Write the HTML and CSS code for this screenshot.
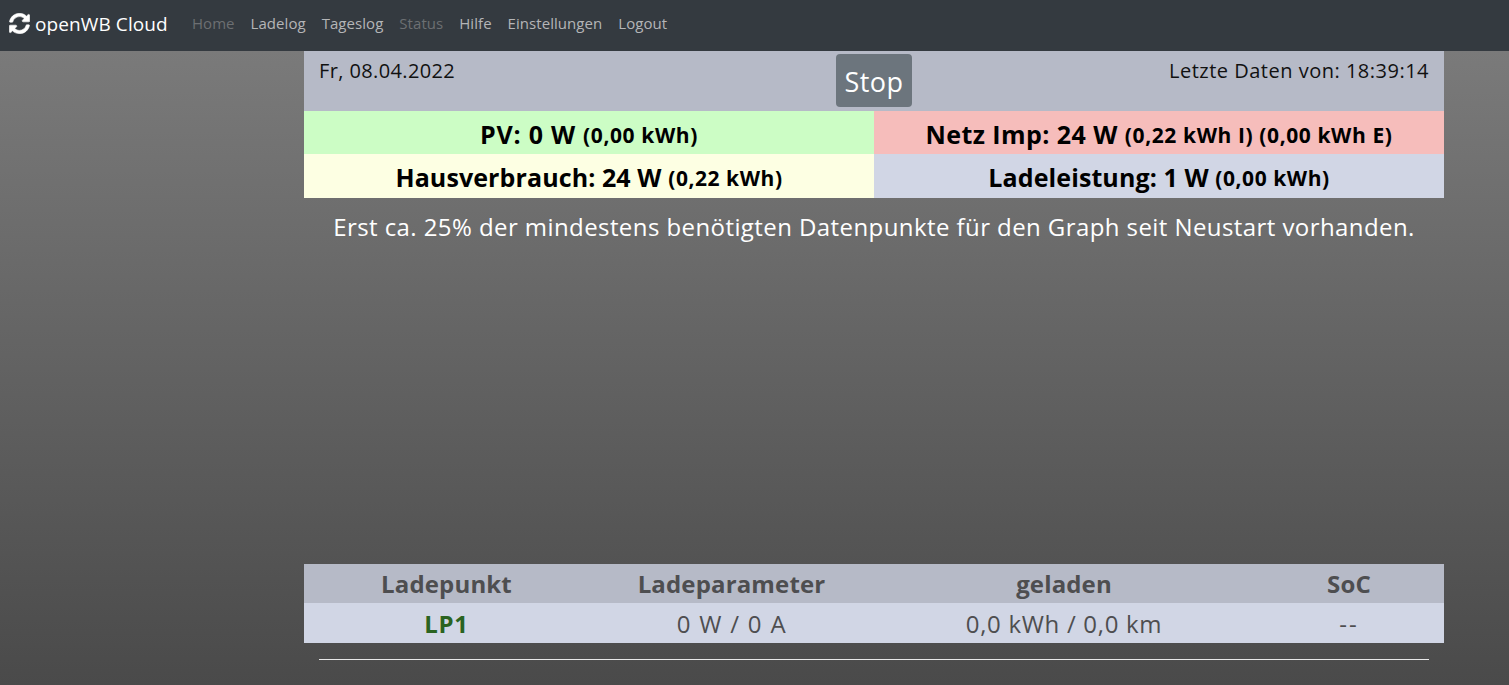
FILE: index.html
```html
<!DOCTYPE html>
<html lang="de">
<head>
<meta charset="utf-8">
<title>openWB Cloud</title>
<link rel="stylesheet" href="styles.css">
</head>
<body>
<nav class="navbar">
  <a class="brand">
    <svg class="brand-icon" viewBox="0 0 512 512" aria-hidden="true"><path fill="#fff" stroke="#fff" stroke-width="14" d="M370.72 133.28C339.46 104 298.9 88 255.93 88c-77.34.07-144.1 53.1-162.54 126.68-1.34 5.36-6.11 9.32-11.63 9.32H24.5c-7.5 0-13.2-6.81-11.8-14.18C34.3 95.1 135.1 8 256 8c66.3 0 126.5 26.08 170.9 68.53L462.6 40.9C477.7 25.8 504 36.5 504 57.9V192c0 13.25-10.75 24-24 24H345.9c-21.4 0-32.1-25.9-17-41l41.8-41.72zM32 296h134.1c21.4 0 32.1 25.9 17 41l-41.8 41.72c31.26 29.28 71.8 45.28 114.8 45.28 77.3-.07 144.1-53.06 162.5-126.68 1.34-5.36 6.11-9.32 11.63-9.32h57.3c7.5 0 13.2 6.81 11.8 14.18C477.7 416.9 376.9 504 256 504c-66.3 0-126.5-26.08-170.9-68.53L49.4 471.1C34.3 486.2 8 475.5 8 454.1V320c0-13.25 10.75-24 24-24z"/></svg>
    <span>openWB Cloud</span>
  </a>
  <ul class="nav-links">
    <li class="link-muted">Home</li>
    <li>Ladelog</li>
    <li>Tageslog</li>
    <li class="link-muted">Status</li>
    <li>Hilfe</li>
    <li>Einstellungen</li>
    <li>Logout</li>
  </ul>
</nav>
<main class="content">
  <header class="top-row">
    <div class="date">Fr, 08.04.2022</div>
    <button class="stop">Stop</button>
    <div class="last">Letzte Daten von: 18:39:14</div>
  </header>
  <section class="tiles">
    <div class="tile tile-green">PV: 0 W <small>(0,00 kWh)</small></div>
    <div class="tile tile-red">Netz Imp: 24 W <small>(0,22 kWh I) (0,00 kWh E)</small></div>
    <div class="tile tile-yellow">Hausverbrauch: 24 W <small>(0,22 kWh)</small></div>
    <div class="tile tile-blue">Ladeleistung: 1 W <small>(0,00 kWh)</small></div>
  </section>
  <p class="notice">Erst ca. 25% der mindestens benötigten Datenpunkte für den Graph seit Neustart vorhanden.</p>
  <table class="lp">
    <colgroup><col class="c1"><col class="c2"><col class="c3"><col class="c4"></colgroup>
    <thead>
      <tr><th>Ladepunkt</th><th>Ladeparameter</th><th>geladen</th><th>SoC</th></tr>
    </thead>
    <tbody>
      <tr><td class="lp-name">LP1</td><td class="lp-params">0 W / 0 A</td><td>0,0 kWh / 0,0 km</td><td class="lp-soc">--</td></tr>
    </tbody>
  </table>
  <hr class="rule">
</main>
</body>
</html>
```

FILE: styles.css
```css
* { box-sizing: border-box; }
html, body { margin: 0; height: 685px; overflow: hidden; }
body {
  font-family: "Open Sans", "Noto Sans", sans-serif;
  background: linear-gradient(#7c7c7c 0, #7a7a7a 51px, #4a4a4a 685px);
  color: #fff;
}
.navbar {
  height: 51px;
  background: #343a40;
  display: flex;
  align-items: center;
  padding: 0 0 4px 9px;
}
.brand {
  display: flex;
  align-items: center;
  gap: 5px;
  color: #fff;
  font-size: 19px;
  letter-spacing: 0.1px;
  width: 183px;
}
.brand-icon { width: 21px; height: 21px; }
.nav-links {
  display: flex;
  gap: 16px;
  list-style: none;
  margin: 0;
  padding: 0;
  font-size: 15px;
  letter-spacing: 0.05px;
  color: #b4b5b7;
  position: relative;
  top: -1px;
}
.link-muted { color: #6c6f72; }
.content { width: 1140px; margin-left: 304px; }
.top-row {
  height: 60px;
  background: #b6bac7;
  color: #111;
  display: grid;
  grid-template-columns: 1fr auto 1fr;
  padding: 0 15px;
  font-size: 20px;
  letter-spacing: 0.45px;
}
.date, .last { padding-top: 6px; }
.date { letter-spacing: 0.38px; }
.last { text-align: right; letter-spacing: 0.5px; }
.stop {
  width: 76px;
  height: 53px;
  margin-top: 3px;
  border: 0;
  border-radius: 4px;
  background: #6c757d;
  color: #fff;
  font: inherit;
  font-size: 27px;
  letter-spacing: 0.4px;
  padding: 1px 0 0;
}
.tiles {
  display: grid;
  grid-template-columns: 570px 570px;
  grid-template-rows: 43px 44px;
}
.tile {
  display: flex;
  align-items: center;
  justify-content: center;
  padding-top: 2px;
  color: #000;
  font-size: 25px;
  font-weight: 700;
  letter-spacing: 0.1px;
  white-space: pre;
}
.tile small { font-size: 21px; font-weight: 700; position: relative; top: 1px; letter-spacing: 0.55px; }
.tile-green { background: #ccfdc5; letter-spacing: 0.75px; }
.tile-red { background: #f6bdbb; letter-spacing: 0.45px; }
.tile-red small, .tile-green small { letter-spacing: 0.6px; }
.tile-yellow { background: #fdffe3; }
.tile-blue { background: #d1d6e5; }
.notice {
  margin: 0;
  padding-top: 12px;
  height: 366px;
  text-align: center;
  font-size: 24px;
  letter-spacing: 0.42px;
  color: #fff;
}
.lp {
  width: 100%;
  border-collapse: collapse;
  table-layout: fixed;
  font-size: 24px;
  color: #4e4e50;
  text-align: center;
}
.c1 { width: 285px; }
.c2 { width: 285px; }
.c3 { width: 380px; }
.c4 { width: 190px; }
.lp th { height: 39px; padding: 0; background: #b6bac7; font-weight: 700; letter-spacing: 0.15px; }
.lp td { height: 40px; padding: 0; background: #d1d6e5; letter-spacing: 0.7px; }
.lp .lp-name { color: #2a6320; font-weight: 700; }
.lp .lp-params { word-spacing: 1.2px; }
.lp .lp-soc { letter-spacing: 2px; }
.rule {
  margin: 16px 15px 0;
  border: 0;
  border-top: 1px solid #e8e8e8;
}
```
